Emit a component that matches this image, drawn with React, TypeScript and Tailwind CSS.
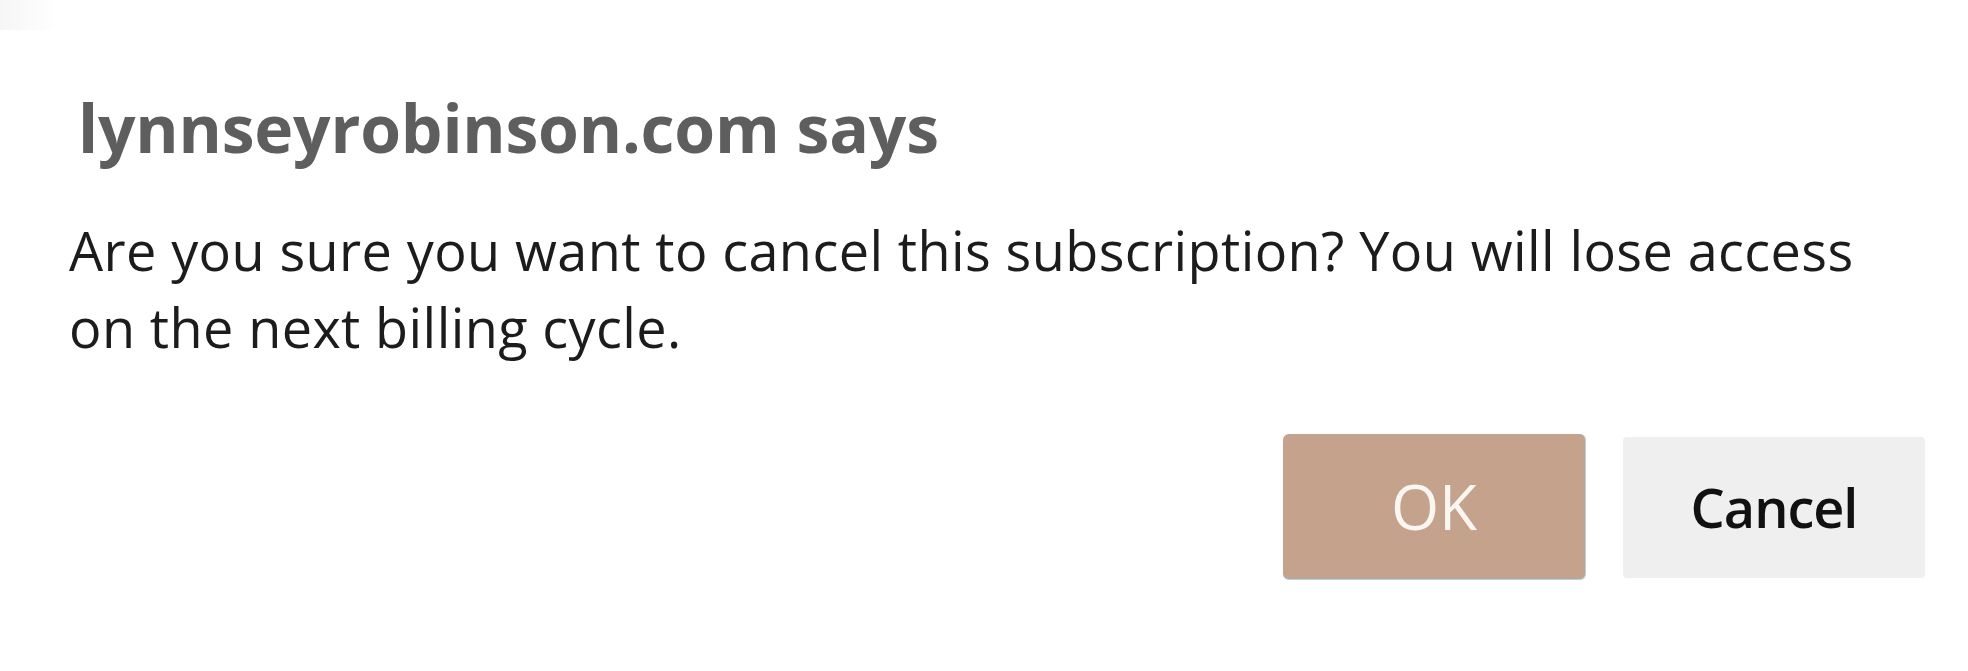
import React from "react";

export default function App() {
  return (
    <div className="w-[1968px] h-[671px] bg-white overflow-hidden relative">
      <div className="absolute left-0 top-0 w-[60px] h-[30px] bg-gradient-to-r from-[#f2f2f2] to-white opacity-70" />
      <div className="flex flex-col pl-[69px] pr-[43px] pt-[82px]">
        <h1
          className="pl-[9px] text-[66px] leading-[90px] font-bold text-[#5e5e5e] tracking-[-0.2px]"
          style={{ fontFamily: '"Open Sans", sans-serif' }}
        >
          lynnseyrobinson.com says
        </h1>
        <p
          className="mt-[40px] text-[54px] leading-[77px] text-[#1c1c1c] tracking-[0.4px] w-[1830px]"
          style={{ fontFamily: '"Open Sans", sans-serif' }}
        >
          Are you sure you want to cancel this subscription? You will lose access on the next billing cycle.
        </p>
        <div className="flex justify-end gap-[37px] mt-[68px]">
          <button
            className="w-[303px] h-[146px] rounded-[6px] bg-[#c4a28b] border-r border-b border-[#a9d3ef] text-[#faf6f2] text-[62px]"
            style={{ fontFamily: '"Open Sans", sans-serif' }}
          >
            OK
          </button>
          <button
            className="w-[302px] h-[141px] mt-[3px] rounded-[4px] bg-[#efefef] text-[#111] text-[54px] font-semibold tracking-[-1px]"
            style={{ fontFamily: '"Open Sans", sans-serif' }}
          >
            Cancel
          </button>
        </div>
      </div>
    </div>
  );
}
